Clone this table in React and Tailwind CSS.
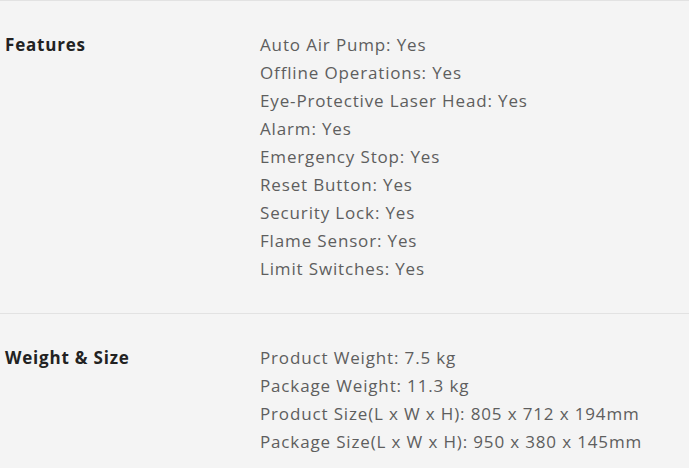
import React from 'react';

const sections = [
  {
    label: 'Features',
    items: [
      'Auto Air Pump: Yes',
      'Offline Operations: Yes',
      'Eye-Protective Laser Head: Yes',
      'Alarm: Yes',
      'Emergency Stop: Yes',
      'Reset Button: Yes',
      'Security Lock: Yes',
      'Flame Sensor: Yes',
      'Limit Switches: Yes',
    ],
  },
  {
    label: 'Weight & Size',
    items: [
      'Product Weight: 7.5 kg',
      'Package Weight: 11.3 kg',
      'Product Size(L x W x H): 805 x 712 x 194mm',
      'Package Size(L x W x H): 950 x 380 x 145mm',
    ],
  },
];

export default function App() {
  return (
    <div className="min-h-[468px] w-[689px] bg-[#f4f4f4] overflow-hidden" style={{ fontFamily: '"Open Sans", sans-serif' }}>
      {sections.map((s) => (
        <div key={s.label} className="flex border-t border-[#e2e2e2] pt-[30px] pb-[29px] mt-px first:mt-0">
          <div className="w-[260px] pl-[5px] text-[17px] leading-[28px] font-bold tracking-[0.8px] text-[#222]">{s.label}</div>
          <div className="flex flex-col">
            {s.items.map((it) => (
              <div key={it} className="text-[17px] leading-[28px] tracking-[0.85px] text-[#5e5e5e] whitespace-nowrap">{it}</div>
            ))}
          </div>
        </div>
      ))}
    </div>
  );
}
